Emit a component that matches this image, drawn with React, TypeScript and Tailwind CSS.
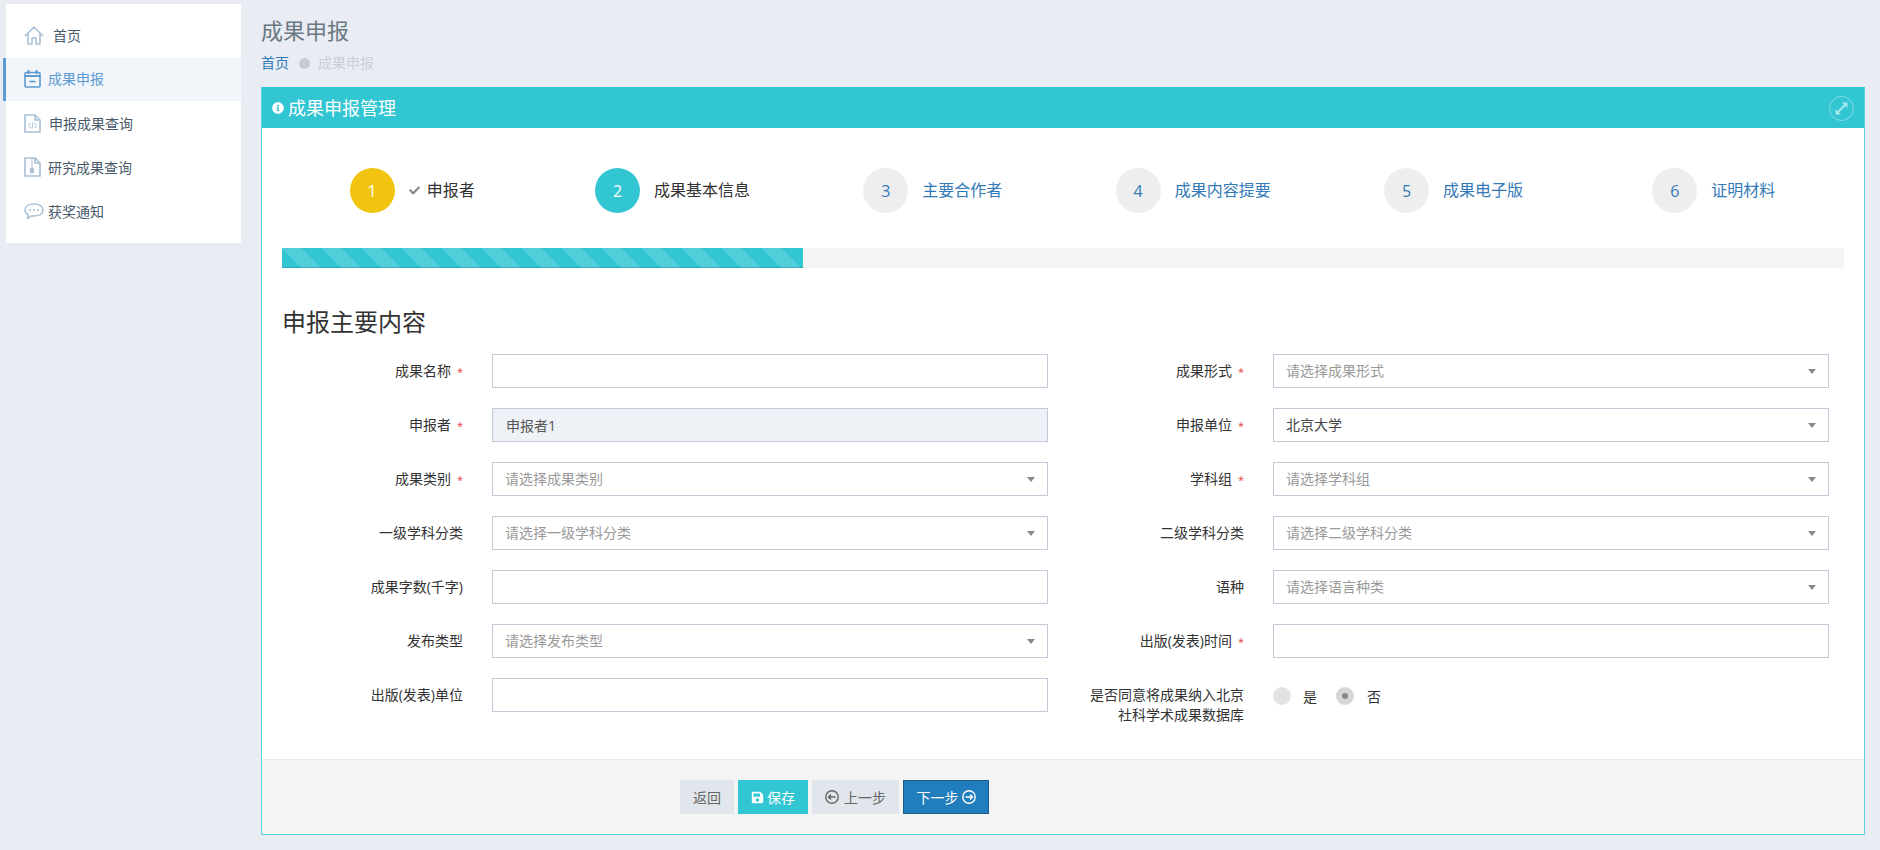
import React from "react";
import { FaInfoCircle, FaCheck, FaSave } from "react-icons/fa";

const strokeCls = "fill-none stroke-current stroke-[1.6]";

function HomeIcon() {
  return (
    <svg width="20" height="19" viewBox="0 0 20 19" className={strokeCls}>
      <path d="M1 10 L10 1 L19 10 M4 7.5 V18 H8 V12 H12 V18 H16 V7.5" strokeLinejoin="round" />
    </svg>
  );
}
function CalIcon() {
  return (
    <svg width="17" height="19" viewBox="0 0 17 19" className={strokeCls}>
      <rect x="1" y="3.5" width="15" height="14.5" rx="1" />
      <path d="M1 7 H16" strokeWidth="2" />
      <path d="M4.5 1 V5 M12.5 1 V5" strokeWidth="2" />
      <path d="M5.5 12.5 H11.5" strokeWidth="1.6" />
    </svg>
  );
}
function FileCode() {
  return (
    <svg width="17" height="19" viewBox="0 0 17 19" className={strokeCls}>
      <path d="M1 1 H11 L16 6 V18 H1 Z M11 1 V6 H16" />
      <path d="M6.5 9 L4.5 11.5 L6.5 14 M10.5 9 L12.5 11.5 L10.5 14 M9 8.5 L8 14.5" strokeWidth="1" />
    </svg>
  );
}
function FileZip() {
  return (
    <svg width="17" height="20" viewBox="0 0 17 20" className={strokeCls}>
      <path d="M1 1 H11 L16 6 V19 H1 Z M11 1 V6 H16" />
      <path d="M7 2 H9 M7 4 H9 M7 6 H9 M7 8 H9" strokeWidth="1" />
      <rect x="6.2" y="11" width="3.6" height="5" rx="1" className="fill-current" strokeWidth="0.6" />
      <path d="M8 9 V11" strokeWidth="1" />
    </svg>
  );
}
function Bubble() {
  return (
    <svg width="20" height="17" viewBox="0 0 20 17" className={strokeCls}>
      <path d="M10 1 C5 1 1 3.2 1 7 C1 9 2.2 10.6 4 11.6 L3.5 15.5 L7.5 12.8 C8.3 12.9 9.1 13 10 13 C15 13 19 10.8 19 7 C19 3.2 15 1 10 1 Z" strokeLinejoin="round" />
      <circle cx="6" cy="7" r="1" className="fill-current" stroke="none" />
      <circle cx="10" cy="7" r="1" className="fill-current" stroke="none" />
      <circle cx="14" cy="7" r="1" className="fill-current" stroke="none" />
    </svg>
  );
}
function CircleArrow({ dir }: { dir: "left" | "right" }) {
  return (
    <svg width="14" height="14" viewBox="0 0 14 14" className="fill-none stroke-current stroke-[1.4]">
      <circle cx="7" cy="7" r="6.2" />
      {dir === "left" ? (
        <path d="M10.5 7 H3.5 M6 4.5 L3.5 7 L6 9.5" />
      ) : (
        <path d="M3.5 7 H10.5 M8 4.5 L10.5 7 L8 9.5" />
      )}
    </svg>
  );
}
function ExpandIcon() {
  return (
    <svg width="13" height="13" viewBox="0 0 13 13" className="fill-current stroke-current">
      <path d="M3 10 L10 3" strokeWidth="2" fill="none" />
      <path d="M7 0.5 H12.5 V6 Z M0.5 7 V12.5 H6 Z" stroke="none" />
    </svg>
  );
}

const nav = [
  { t: "首页", icon: <HomeIcon />, gap: "gap-[9px]" },
  { t: "成果申报", icon: <CalIcon />, gap: "gap-[7px]", active: true },
  { t: "申报成果查询", icon: <FileCode />, gap: "gap-[8px]" },
  { t: "研究成果查询", icon: <FileZip />, gap: "gap-[7px]" },
  { t: "获奖通知", icon: <Bubble />, gap: "gap-[4px]" },
];

const steps = [
  { n: 1, t: "申报者", cls: "bg-[#f1c40f] text-white", label: "text-[#333]", check: true },
  { n: 2, t: "成果基本信息", cls: "bg-[#32c5d2] text-white", label: "text-[#333]" },
  { n: 3, t: "主要合作者", cls: "bg-[#eeeeee] text-[#337ab7]", label: "text-[#337ab7]" },
  { n: 4, t: "成果内容提要", cls: "bg-[#eeeeee] text-[#337ab7]", label: "text-[#337ab7]" },
  { n: 5, t: "成果电子版", cls: "bg-[#eeeeee] text-[#337ab7]", label: "text-[#337ab7]" },
  { n: 6, t: "证明材料", cls: "bg-[#eeeeee] text-[#337ab7]", label: "text-[#337ab7]" },
];

function Label({ children, star }: { children: React.ReactNode; star?: boolean }) {
  return (
    <div className="w-[181px] mr-[29px] shrink-0 text-right text-[14px] leading-[20px] text-[#333]">
      {children}
      {star && <span className="inline-block w-[12px] text-[11px] text-[#e73d4a]">*</span>}
    </div>
  );
}
function TextInput({ value, disabled }: { value?: string; disabled?: boolean }) {
  return (
    <input
      readOnly
      value={value ?? ""}
      className={`w-[556px] h-[34px] border border-[#c2cad8] px-[13px] text-[14px] text-[#555] outline-none ${disabled ? "bg-[#eef1f5]" : "bg-white"}`}
    />
  );
}
function Select({ text, value }: { text?: string; value?: string }) {
  return (
    <div className="w-[556px] h-[34px] border border-[#c2cad8] bg-white pl-[12px] pr-[12px] pb-[2px] flex items-center justify-between text-[14px]">
      <span className={value ? "text-[#444]" : "text-[#999]"}>{value ?? text}</span>
      <span className="w-0 h-0 mt-[2px] border-x-[4px] border-t-[5px] border-x-transparent border-t-[#888]" />
    </div>
  );
}
function Row({ label, star, children }: { label: React.ReactNode; star?: boolean; children: React.ReactNode }) {
  return (
    <div className="flex items-center h-[34px]">
      <Label star={star}>{label}</Label>
      {children}
    </div>
  );
}

const btn = "h-[34px] flex items-center justify-center gap-[3px] text-[14px]";

export default function App() {
  return (
    <div className="flex items-start min-h-[850px] bg-[#e9ecf3] [font-family:'Open_Sans','Noto_Sans_CJK_SC',sans-serif] text-[14px]">
      <aside className="ml-[6px] mt-[4px] w-[235px] shrink-0 bg-white pt-[10px] pb-[9px]">
        {nav.map((n) => (
          <div
            key={n.t}
            className={`flex items-center pb-[2px] pl-[18px] ${n.gap} ${
              n.active
                ? "h-[43px] mb-[1px] bg-[#f2f5f9] text-[#5b9bd1] shadow-[-3px_0_0_#5b9bd1]"
                : "h-[44px] text-[#485a6a]"
            }`}
          >
            <span className={`flex ${n.active ? "text-[#5b9bd1]" : "text-[#a9c0d4]"}`}>{n.icon}</span>
            <span>{n.t}</span>
          </div>
        ))}
      </aside>

      <main className="ml-[20px] w-[1604px] shrink-0 pt-[15px]">
        <h1 className="h-[30px] leading-[30px] text-[22px] text-[#697882] font-normal">成果申报</h1>
        <div className="mt-[8px] h-[20px] flex items-center text-[14px] leading-[20px]">
          <span className="text-[#337ab7]">首页</span>
          <span className="ml-[10px] w-[11px] h-[11px] rounded-full bg-[#c5cbd8]" />
          <span className="ml-[8px] text-[#c9ced9]">成果申报</span>
        </div>

        <section className="mt-[14px] border border-[#5dd2de] border-t-[#32c5d2] bg-white">
          <header className="h-[40px] bg-[#32c5d2] text-white flex items-center justify-between pl-[10px] pr-[10px]">
            <div className="flex items-center gap-[4px]">
              <FaInfoCircle className="w-[12px] h-[12px]" />
              <span className="text-[18px] leading-[24px]">成果申报管理</span>
            </div>
            <span className="w-[25px] h-[25px] rounded-full border border-[#83dfe6] text-[#a8e8ee] flex items-center justify-center">
              <ExpandIcon />
            </span>
          </header>

          <div className="px-[20px] pt-[40px] pb-[47px]">
            <div className="grid grid-cols-6">
              {steps.map((s) => (
                <div key={s.n} className="flex items-center justify-center">
                  <span className={`w-[45px] h-[45px] rounded-full flex items-center justify-center text-[16px] ${s.cls}`}>
                    {s.n}
                  </span>
                  <span className={`ml-[14px] pb-[1px] flex items-center gap-[7px] text-[16px] leading-[22px] ${s.label}`}>
                    {s.check && <FaCheck className="w-[11px] h-[11px] text-[#888]" />}
                    {s.t}
                  </span>
                </div>
              ))}
            </div>

            <div className="mt-[35px] h-[20px] bg-[#f5f5f5]">
              <div className="w-1/3 h-full bg-[#32c5d2] shadow-[inset_0_-1px_0_rgba(0,0,0,0.15)] bg-[linear-gradient(45deg,rgba(255,255,255,.15)_25%,transparent_25%,transparent_50%,rgba(255,255,255,.15)_50%,rgba(255,255,255,.15)_75%,transparent_75%,transparent)] bg-[length:40px_40px]" />
            </div>

            <h2 className="mt-[37px] h-[34px] leading-[34px] text-[24px] font-normal text-[#333]">申报主要内容</h2>

            <div className="mt-[15px] grid grid-cols-2 gap-y-[20px]">
              <Row label="成果名称" star><TextInput /></Row>
              <Row label="成果形式" star><Select text="请选择成果形式" /></Row>
              <Row label="申报者" star><TextInput value="申报者1" disabled /></Row>
              <Row label="申报单位" star><Select value="北京大学" /></Row>
              <Row label="成果类别" star><Select text="请选择成果类别" /></Row>
              <Row label="学科组" star><Select text="请选择学科组" /></Row>
              <Row label="一级学科分类"><Select text="请选择一级学科分类" /></Row>
              <Row label="二级学科分类"><Select text="请选择二级学科分类" /></Row>
              <Row label="成果字数(千字)"><TextInput /></Row>
              <Row label="语种"><Select text="请选择语言种类" /></Row>
              <Row label="发布类型"><Select text="请选择发布类型" /></Row>
              <Row label="出版(发表)时间" star><TextInput /></Row>
              <Row label="出版(发表)单位"><TextInput /></Row>
              <div className="flex items-start h-[34px] pt-[7px]">
                <Label>
                  是否同意将成果纳入北京
                  <br />
                  社科学术成果数据库
                </Label>
                <div className="flex items-center h-[20px] mt-[1px] text-[#333]">
                  <span className="w-[18px] h-[18px] rounded-full bg-[#e3e3e3]" />
                  <span className="ml-[12px]">是</span>
                  <span className="ml-[19px] w-[18px] h-[18px] rounded-full bg-[#d6d6d6] flex items-center justify-center">
                    <span className="w-[6px] h-[6px] rounded-full bg-[#888]" />
                  </span>
                  <span className="ml-[13px]">否</span>
                </div>
              </div>
            </div>
          </div>

          <footer className="h-[75px] border-t border-[#e7ecf1] bg-[#f4f4f4] pt-[20px] pl-[418px] flex items-start gap-[4px]">
            <button className={`${btn} w-[54px] bg-[#e1e5ec] text-[#666]`}>返回</button>
            <button className={`${btn} w-[70px] bg-[#32c5d2] text-white`}>
              <FaSave className="w-[13px] h-[13px]" />
              保存
            </button>
            <button className={`${btn} w-[87px] bg-[#e1e5ec] text-[#666] gap-[5px]`}>
              <CircleArrow dir="left" />
              上一步
            </button>
            <button className={`${btn} w-[86px] bg-[#217ebd] border border-[#1a5b8c] text-white`}>
              下一步
              <CircleArrow dir="right" />
            </button>
          </footer>
        </section>
      </main>
    </div>
  );
}
